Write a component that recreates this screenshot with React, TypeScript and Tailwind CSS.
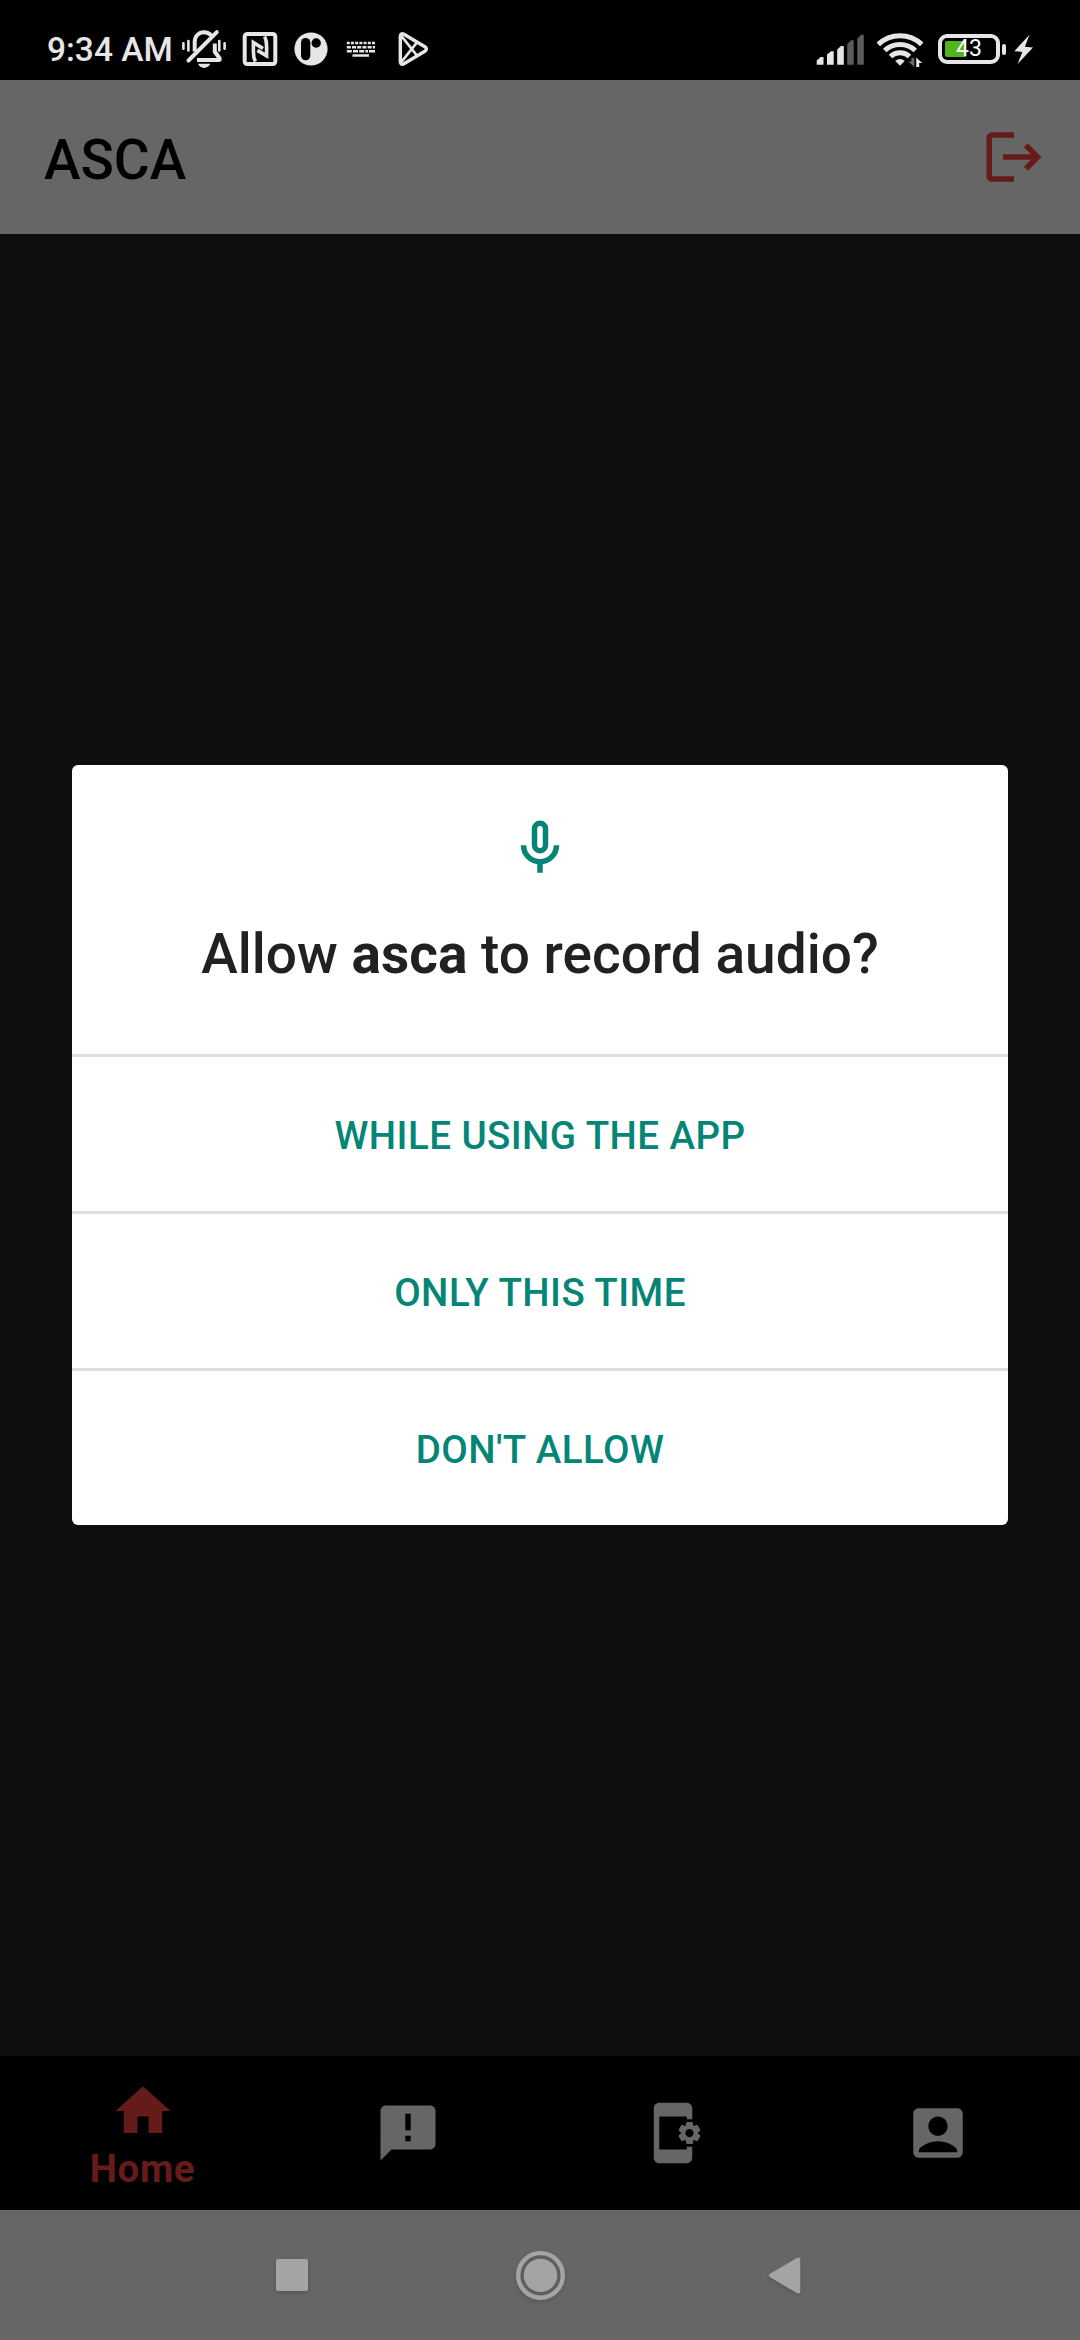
import React from "react";
import { MdAccountBox, MdAppSettingsAlt, MdHome, MdLogout } from "react-icons/md";

const INK = "#e6e6e6";

function MutedBell() {
  return (
    <svg className="h-10 w-[46px] shrink-0" viewBox="181 30 46 40" fill="none" stroke={INK} strokeLinecap="round" strokeLinejoin="round">
      <path strokeWidth="2.6" d="M183.4 44.3v5.4M188.4 42v9.4M219.3 42v9.4M224.6 44.3v5.4" />
      <path strokeWidth="4" strokeLinecap="butt" d="M194.7 52.5V43c0-5.600 3.800-9.800 9.300-9.800 3 0 5.600 1.200 7.400 3.300" />
      <path strokeWidth="4" strokeLinecap="butt" d="M214.800 44.500v8.200l4.600 6.300q1 2-1 2H197" />
      <path strokeWidth="4" d="M188.500 61.500 216.800 33.200" />
      <path fill={INK} stroke="none" d="M198 64.800h12.200c-1 2.600-3.400 4.100-6.100 4.100s-5.100-1.500-6.100-4.100z" />
    </svg>
  );
}

function Nfc() {
  return (
    <svg className="ml-[15px] h-9 w-9 shrink-0" viewBox="242 31 36 36" fill="none" stroke={INK}>
      <rect x="244.700" y="33.900" width="30.600" height="30.200" rx="2.500" strokeWidth="4" />
      <path strokeWidth="3.600" d="M255.300 61.500c-1.500-3-1.900-6-1.900-10V42.500l9.600 6" />
      <path strokeWidth="3.600" d="M264.700 36.500c1.500 3 1.900 6 1.900 10v9.300l-9.200-5.400" />
    </svg>
  );
}

function Patreon() {
  return (
    <svg className="ml-[15px] h-9 w-9 shrink-0" viewBox="293 31 36 36">
      <circle cx="311" cy="49" r="16.600" fill={INK} />
      <rect x="301" y="38" width="9.300" height="22.300" rx="4.650" fill="#000" />
      <circle cx="316.200" cy="43" r="4.700" fill="#000" />
    </svg>
  );
}

function Keyboard() {
  return (
    <svg className="ml-4 h-9 w-8 shrink-0" viewBox="345 31 32 36" fill="none" stroke={INK} strokeWidth="2.500">
      <path strokeDasharray="3 1.200" d="M346.800 43.100H375" />
      <path strokeDasharray="4 1.200" d="M346.800 47.200H375" />
      <path strokeDasharray="5 1.200" d="M346.800 51.200H368" />
      <path d="M369 51.200h6M352.500 55.400h16.500" />
    </svg>
  );
}

function PlayStore() {
  return (
    <svg className="ml-[19px] h-9 w-9 shrink-0" viewBox="396 31 36 36" fill="none" stroke={INK} strokeLinejoin="round">
      <path strokeWidth="3.400" d="M400.300 36.500c0-2.400 1.700-3.300 3.600-2.200l21 12.500c2 1.200 2 3.200 0 4.400l-21 12.500c-1.900 1.100-3.600.200-3.600-2.200z" />
      <path strokeWidth="2.800" d="M401 35.500 417.300 56M401 62.500 417.300 42" />
    </svg>
  );
}

function Signal() {
  return (
    <svg className="h-9 w-[50px] shrink-0" viewBox="815 31 50 36" fill={INK}>
      <path d="M816.700 64.700v-4.200l4-3.500h2.800v7.700zM827 64.700V54.500l4-3.300h2.700v13.500zM837.200 64.700V49.500l3.800-3.500h2.800v18.700z" />
      <path fill="#5b5b5b" d="M847.200 64.700V44l4-3.700h2.500v24.400zM857.300 64.700V38.500l4-3.700h2.500v29.900z" />
    </svg>
  );
}

function Wifi() {
  return (
    <svg className="ml-[11px] h-10 w-[50px] shrink-0" viewBox="876 29 50 40" fill="none" stroke={INK} strokeWidth="5">
      <path d="M878.300 44.400a31.500 31.500 0 0 1 43.400 0" />
      <path d="M884.700 50.500a22.500 22.500 0 0 1 30.600 0" />
      <path d="M890.500 56.500a14 14 0 0 1 19 0" />
      <path fill={INK} stroke="none" d="M895.300 61c2.600-2.700 6.800-2.700 9.400 0l-4.700 4.800z" />
      <path fill="#6b6b6b" stroke="none" d="M911.300 58h3v9l-6-5.500h3z" />
      <path fill={INK} stroke="none" d="M916.200 67V57.500l6 5.500h-3v4z" />
    </svg>
  );
}

function Battery() {
  return (
    <div className="ml-3 flex shrink-0 items-center">
      <div className="relative flex h-[30px] w-[62px] items-center rounded-[9px] border-4 border-[#e6e6e6] pl-[3px]">
        <div className="h-4 w-[21px] rounded-l-[2px] bg-[#52b415]" />
        <span className="absolute left-[14px] top-[-1px] text-[23px] leading-6 text-white">43</span>
      </div>
      <div className="ml-[2px] h-[11px] w-[4px] rounded-[2px] bg-[#e6e6e6]" />
    </div>
  );
}

function Bolt() {
  return (
    <svg className="ml-[7px] h-9 w-[22px] shrink-0" viewBox="1013 31 22 36" fill={INK}>
      <path d="M1029.500 34.700 1014.300 51.200 1022.300 52 1017.600 64 1033 47.600 1024.900 46.800z" />
    </svg>
  );
}

function StatusBar() {
  return (
    <header className="flex h-20 items-start bg-black">
      <span className="ml-[47px] mt-[33px] w-[134px] whitespace-nowrap text-[33.5px] font-medium leading-[34px] text-[#e6e6e6]">9:34 AM</span>
      <div className="mt-[19px] flex h-[60px] items-center">
        <MutedBell />
        <Nfc />
        <Patreon />
        <Keyboard />
        <PlayStore />
      </div>
      <div className="ml-auto mr-[45px] mt-[19px] flex h-[60px] items-center">
        <Signal />
        <Wifi />
        <Battery />
        <Bolt />
      </div>
    </header>
  );
}

function MicIcon() {
  return (
    <svg className="size-[66px]" viewBox="0 0 24 24" fill="none" stroke="#048576" strokeWidth="2">
      <rect x="10" y="3" width="4" height="10" rx="2" />
      <path d="M6 11a6 6 0 0 0 12 0M12 17v4" />
    </svg>
  );
}

function AnnouncementIcon() {
  return (
    <svg className="size-[66px]" viewBox="0 0 24 24" fill="currentColor">
      <path d="M20 2H4c-1.100 0-1.990.900-1.990 2L2 22l4-4h14c1.100 0 2-.900 2-2V4c0-1.100-.900-2-2-2zm-7 9h-2V5h2v6zm0 4h-2v-2h2v2z" />
    </svg>
  );
}

function PermissionDialog() {
  return (
    <div role="dialog" className="absolute inset-x-[72px] top-[765px] overflow-hidden rounded-[6px] bg-white">
      <div className="flex h-[289px] flex-col items-center pt-[50px]">
        <MicIcon />
        <h2 className="mt-[41px] whitespace-nowrap text-[55px] font-medium leading-[64px] text-[#212121]">
          Allow <b className="font-bold">asca</b> to record audio?
        </h2>
      </div>
      {["While using the app", "Only this time", "Don't allow"].map((label) => (
        <button
          key={label}
          className="flex h-[157px] w-full items-center justify-center border-t-[3px] border-[#dfdfdf] pt-[4px] text-[38.5px] font-medium uppercase tracking-[0.44px] text-[#048576]"
        >
          {label}
        </button>
      ))}
    </div>
  );
}

export default function App() {
  return (
    <div className="relative flex h-[2340px] w-[1080px] flex-col overflow-hidden bg-[#0e0e0e] font-['Roboto',sans-serif]">
      <StatusBar />
      <div className="flex h-[154px] items-center justify-between bg-[#666666] pl-11 pr-[33px]">
        <h1 className="mt-[6px] text-[55px] font-medium leading-[64px] text-black">ASCA</h1>
        <MdLogout className="size-[66px] text-[#661b1b]" />
      </div>
      <main className="flex-1" />
      <nav className="grid h-[154px] grid-cols-4 bg-black px-[10px] text-[#666666]">
        <div className="flex flex-col items-center pt-[22px] text-[#661b1b]">
          <MdHome className="size-[66px]" />
          <span className="mt-[2px] text-[38.5px] font-bold leading-[46px] tracking-[0.6px]">Home</span>
        </div>
        <div className="flex items-center justify-center">
          <AnnouncementIcon />
        </div>
        <div className="flex items-center justify-center">
          <MdAppSettingsAlt className="size-[66px]" />
        </div>
        <div className="flex items-center justify-center">
          <MdAccountBox className="size-[66px]" />
        </div>
      </nav>
      <div className="flex h-[130px] items-center bg-[#666666] pl-[262px] text-[#a4a4a4]">
        <svg className="size-[60px] drop-shadow-[0_2px_2px_rgba(0,0,0,0.15)]" viewBox="0 0 60 60" fill="currentColor">
          <rect x="14" y="14" width="32" height="32" rx="2" />
        </svg>
        <svg className="ml-[188px] size-[60px] drop-shadow-[0_2px_2px_rgba(0,0,0,0.15)]" viewBox="0 0 60 60" fill="currentColor">
          <circle cx="30.500" cy="30.400" r="22.300" fill="none" stroke="currentColor" strokeWidth="4.400" />
          <circle cx="30.500" cy="30.400" r="16.700" />
        </svg>
        <svg className="ml-[184px] size-[60px] drop-shadow-[0_2px_2px_rgba(0,0,0,0.15)]" viewBox="0 0 60 60" fill="currentColor" stroke="currentColor" strokeWidth="4" strokeLinejoin="round">
          <path d="M17 30.500 44.300 14.500v32z" />
        </svg>
      </div>
      <PermissionDialog />
    </div>
  );
}
